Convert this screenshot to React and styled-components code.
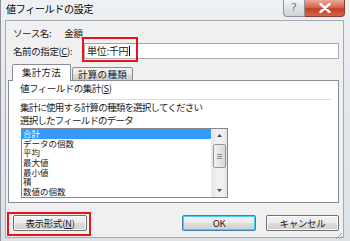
import React from "react";
import styled, { createGlobalStyle } from "styled-components";

const GlobalStyle = createGlobalStyle`
  html, body {
    margin: 0;
    padding: 0;
    background: #ffffff;
  }
  body {
    font-family: "Noto Sans CJK JP", "Noto Sans", sans-serif;
  }
`;

const items = ["合計", "データの個数", "平均", "最大値", "最小値", "積", "数値の個数"];

export default function App() {
  return (
    <>
      <GlobalStyle />
      <Window>
        <TitleBar>
          <Title>値フィールドの設定</Title>
          <Controls>
            <HelpButton>?</HelpButton>
            <CloseButton>
              <svg width="12" height="10" viewBox="0 0 12 10">
                <path
                  d="M1.5 1 L10.5 9 M10.5 1 L1.5 9"
                  stroke="#ffffff"
                  strokeWidth="2.4"
                  strokeLinecap="round"
                />
              </svg>
            </CloseButton>
          </Controls>
        </TitleBar>

        <Body>
          <SourceRow>
            <Label>ソース名:</Label>
            <Value>金額</Value>
          </SourceRow>

          <NameRow>
            <Label>
              名前の指定(<u>C</u>):
            </Label>
            <InputWrap>
              <Input>
                単位:千円<Caret />
              </Input>
              <Highlight style={{ left: -2, top: -6, width: 56, height: 25 }} />
            </InputWrap>
          </NameRow>

          <Tabs>
            <Tab active>集計方法</Tab>
            <Tab>計算の種類</Tab>
          </Tabs>

          <Panel>
            <GroupHeading>
              値フィールドの集計(<u>S</u>)
            </GroupHeading>
            <Separator />
            <PanelText>集計に使用する計算の種類を選択してください</PanelText>
            <PanelText>選択したフィールドのデータ</PanelText>
            <ListBox>
              <List>
                {items.map((item, i) => (
                  <ListItem key={item} selected={i === 0}>
                    {item}
                  </ListItem>
                ))}
              </List>
              <ScrollBar>
                <ArrowBox>
                  <svg width="5" height="3" viewBox="0 0 5 3">
                    <path d="M0 3 L2.5 0 L5 3 Z" fill="#4d4d4d" />
                  </svg>
                </ArrowBox>
                <Thumb>
                  <Grip />
                  <Grip />
                  <Grip />
                </Thumb>
                <Track />
                <ArrowBox>
                  <svg width="5" height="3" viewBox="0 0 5 3">
                    <path d="M0 0 L2.5 3 L5 0 Z" fill="#4d4d4d" />
                  </svg>
                </ArrowBox>
              </ScrollBar>
            </ListBox>
          </Panel>

          <ButtonRow>
            <ButtonWrap>
              <Button width={74}>
                表示形式(<u>N</u>)
              </Button>
              <Highlight style={{ left: -6, top: -3, width: 84, height: 24 }} />
            </ButtonWrap>
            <Spacer />
            <Button width={74} primary>
              OK
            </Button>
            <Button width={73}>キャンセル</Button>
          </ButtonRow>
          <ResizeGrip>
            <svg width="8" height="8" viewBox="0 0 8 8">
              <path d="M7 1 L1 7 M7 4 L4 7 M7 7 L7 7" stroke="#9aa0a6" strokeWidth="1" />
            </svg>
          </ResizeGrip>
        </Body>
      </Window>
    </>
  );
}

const Window = styled.div`
  width: 350px;
  height: 241px;
  box-sizing: border-box;
  background: linear-gradient(180deg, #eef1f4 0%, #e4e8ec 40%, #dde2e7 100%);
  border-left: 1px solid #8d9399;
  display: flex;
  flex-direction: column;
  overflow: hidden;
`;

const TitleBar = styled.div`
  height: 20px;
  display: flex;
  align-items: flex-start;
  justify-content: space-between;
  padding-left: 5px;
  padding-right: 5px;
`;

const Title = styled.div`
  font-size: 10px;
  line-height: 18px;
  color: #000;
  letter-spacing: -0.3px;
`;

const Controls = styled.div`
  display: flex;
  height: 17px;
`;

const HelpButton = styled.div`
  width: 22px;
  height: 17px;
  box-sizing: border-box;
  border: 1px solid #8e949a;
  border-top: none;
  border-radius: 0 0 0 4px;
  background: linear-gradient(180deg, #f4f5f6 0%, #dfe2e5 50%, #cdd1d5 100%);
  color: #6f757b;
  font-family: "DejaVu Sans", sans-serif;
  font-size: 11px;
  line-height: 16px;
  text-align: center;
`;

const CloseButton = styled.div`
  width: 40px;
  height: 17px;
  box-sizing: border-box;
  border: 1px solid #8f3d34;
  border-top: none;
  border-left: none;
  border-radius: 0 0 4px 0;
  background: linear-gradient(180deg, #e9a99b 0%, #d7684f 45%, #c43f23 55%, #d2664c 100%);
  display: flex;
  align-items: center;
  justify-content: center;
`;

const Body = styled.div`
  position: relative;
  margin: 0 6px 0 4px;
  flex: 1;
  margin-bottom: 3px;
  box-sizing: border-box;
  background: #f0f0f0;
  border: 1px solid #a3aab1;
  padding: 5px 4px 0 2px;
  display: flex;
  flex-direction: column;
  font-size: 9.5px;
  color: #1a1a1a;
`;

const SourceRow = styled.div`
  display: flex;
  height: 13px;
  align-items: center;
  padding-left: 5px;
  gap: 13px;
`;

const Label = styled.span`
  letter-spacing: -0.4px;
  white-space: nowrap;
  u {
    text-decoration: underline;
  }
`;

const Value = styled.span`
  letter-spacing: -0.2px;
`;

const NameRow = styled.div`
  display: flex;
  align-items: center;
  margin-top: 4px;
  padding-left: 5px;
  height: 16px;
`;

const InputWrap = styled.div`
  position: relative;
  margin-left: auto;
  width: 255px;
  height: 16px;
`;

const Input = styled.div`
  height: 16px;
  box-sizing: border-box;
  background: #ffffff;
  border: 1px solid #abadb3;
  border-top-color: #9ea3aa;
  padding-left: 2px;
  font-size: 10px;
  line-height: 14px;
  display: flex;
  align-items: center;
  letter-spacing: -0.3px;
`;

const Caret = styled.span`
  display: inline-block;
  width: 1px;
  height: 10px;
  background: #000;
  margin-left: 1px;
`;

const Highlight = styled.div`
  position: absolute;
  box-sizing: border-box;
  border: 2px solid #e8141c;
  pointer-events: none;
`;

const Tabs = styled.div`
  display: flex;
  align-items: flex-end;
  margin-top: 5px;
  padding-left: 4px;
  height: 17px;
  position: relative;
  z-index: 1;
  margin-bottom: -1px;
`;

const Tab = styled.div`
  box-sizing: border-box;
  width: ${(p) => (p.active ? "59px" : "61px")};
  height: ${(p) => (p.active ? "17px" : "14px")};
  margin-left: ${(p) => (p.active ? "0" : "1px")};
  border: 1px solid #898c95;
  border-bottom: ${(p) => (p.active ? "none" : "1px solid #898c95")};
  border-radius: 2px 2px 0 0;
  background: ${(p) =>
    p.active ? "#ffffff" : "linear-gradient(180deg, #f2f2f2 0%, #ebebeb 50%, #dddddd 51%, #cfcfcf 100%)"};
  font-size: 9.5px;
  line-height: ${(p) => (p.active ? "15px" : "12px")};
  text-align: center;
  letter-spacing: 0.3px;
`;

const Panel = styled.div`
  height: 123px;
  box-sizing: border-box;
  background: #ffffff;
  border: 1px solid #898c95;
  padding: 1px 7px 0 11px;
  display: flex;
  flex-direction: column;
`;

const GroupHeading = styled.div`
  height: 13px;
  line-height: 13px;
  letter-spacing: -0.5px;
  u {
    text-decoration: underline;
  }
`;

const Separator = styled.div`
  height: 1px;
  background: #d5dfe5;
  margin-top: 4px;
  margin-bottom: 1px;
`;

const PanelText = styled.div`
  height: 13px;
  line-height: 13px;
  letter-spacing: -0.8px;
  white-space: nowrap;
`;

const ListBox = styled.div`
  margin-top: 1px;
  margin-left: 1px;
  width: 207px;
  height: 70px;
  box-sizing: border-box;
  border: 1px solid #828790;
  background: #ffffff;
  display: flex;
`;

const List = styled.div`
  flex: 1;
  display: flex;
  flex-direction: column;
  overflow: hidden;
`;

const ListItem = styled.div`
  flex: none;
  height: 9.7px;
  line-height: 9.7px;
  font-size: 8.5px;
  padding-left: 1px;
  letter-spacing: 0;
  background: ${(p) => (p.selected ? "#3399ff" : "transparent")};
  color: ${(p) => (p.selected ? "#ffffff" : "#1a1a1a")};
`;

const ScrollBar = styled.div`
  width: 15px;
  display: flex;
  flex-direction: column;
  background: linear-gradient(90deg, #e3e3e3 0%, #f0f0f0 30%, #f0f0f0 70%, #e3e3e3 100%);
  border-left: 1px solid #ececec;
`;

const ArrowBox = styled.div`
  height: 13px;
  display: flex;
  align-items: center;
  justify-content: center;
`;

const Thumb = styled.div`
  margin: 2px 1px 0 1px;
  height: 24px;
  box-sizing: border-box;
  border: 1px solid #979797;
  border-radius: 2px;
  background: linear-gradient(90deg, #f2f2f2 0%, #e4e4e4 50%, #d6d6d6 100%);
  display: flex;
  flex-direction: column;
  align-items: center;
  justify-content: center;
  gap: 1px;
`;

const Grip = styled.div`
  width: 5px;
  height: 1px;
  background: #8a8a8a;
`;

const Track = styled.div`
  flex: 1;
`;

const ButtonRow = styled.div`
  display: flex;
  align-items: center;
  margin-top: 12px;
  padding-left: 5px;
  gap: 10px;
`;

const ButtonWrap = styled.div`
  position: relative;
`;

const Spacer = styled.div`
  flex: 1;
`;

const Button = styled.div`
  width: ${(p) => p.width}px;
  height: 16px;
  box-sizing: border-box;
  border: 1px solid ${(p) => (p.primary ? "#3c7fb1" : "#707070")};
  border-radius: 2px;
  box-shadow: ${(p) => (p.primary ? "inset 0 0 0 1px #48d0f4" : "inset 0 0 0 1px #fbfbfb")};
  background: linear-gradient(180deg, #f2f2f2 0%, #ebebeb 50%, #dddddd 51%, #cfcfcf 100%);
  font-size: 9.5px;
  line-height: 14px;
  text-align: center;
  color: #1a1a1a;
  letter-spacing: -0.3px;
  u {
    text-decoration: underline;
  }
`;

const ResizeGrip = styled.div`
  position: absolute;
  right: 0;
  bottom: 0;
  width: 8px;
  height: 8px;
`;
